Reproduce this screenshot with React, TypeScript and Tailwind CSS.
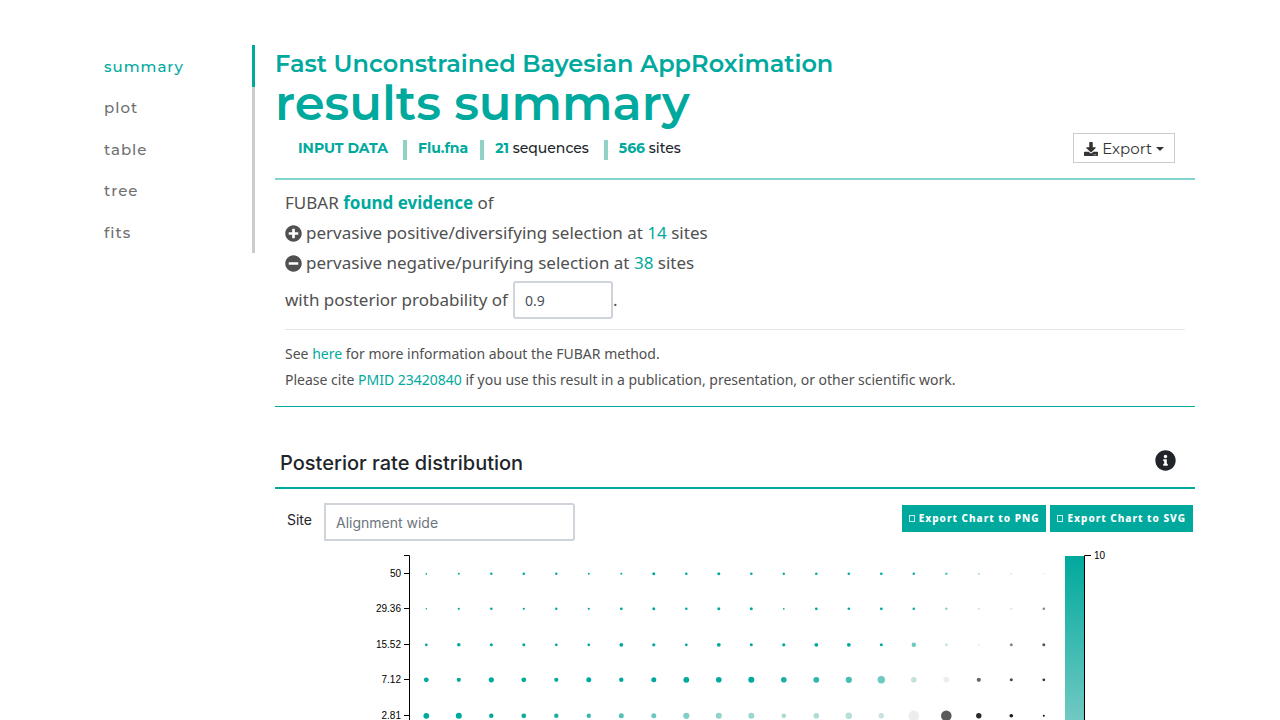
import { FaDownload, FaInfoCircle, FaMinusCircle, FaPlusCircle } from "react-icons/fa";

const sections = ["summary", "plot", "table", "tree", "fits"];

const T = "#00a99d";

type Dot = [radius: number, fill: string];

const rows: { label: string; y: number; dots: Dot[] }[] = [
  {
    label: "50",
    y: 29,
    dots: [
      [0.9, T], [1, T], [1.2, T], [1.3, T], [1.2, T], [1, T], [1, T], [1.5, T], [1.3, T], [1.5, T],
      [1.3, T], [1.2, T], [1.3, T], [1.3, T], [1.3, T], [1.3, "#12ab9f"], [1.3, "#5dc2b9"],
      [1.1, "#b5ddd8"], [0.9, "#dddddd"], [0.9, "#eeeeee"],
    ],
  },
  {
    label: "29.36",
    y: 64,
    dots: [
      [0.8, T], [1.1, T], [1.3, T], [1.1, T], [1.2, T], [1.1, T], [1.4, T], [1.5, T], [1.3, T], [1.5, T],
      [1.5, T], [0.9, T], [1.4, T], [1.3, T], [1.4, T], [1.4, "#21aea3"], [1.2, "#8accc5"],
      [1, "#cfe2df"], [1, "#dddddd"], [1.3, "#888888"],
    ],
  },
  {
    label: "15.52",
    y: 100,
    dots: [
      [1.4, T], [1.8, T], [1.5, T], [1.5, T], [1.4, T], [1.4, T], [1.9, T], [1.6, T], [1.4, T], [1.9, T],
      [1.5, T], [1.6, T], [1.9, T], [1.9, T], [1.5, T], [2.2, "#6cc7bf"], [1.5, "#c8e4e0"],
      [1.2, "#eeeeee"], [1.5, "#888888"], [1.5, "#555555"],
    ],
  },
  {
    label: "7.12",
    y: 135,
    dots: [
      [2.4, T], [2.1, T], [2.6, T], [2.4, T], [2.1, T], [2.5, T], [2.2, T], [2.5, T], [2.9, T], [2.8, T],
      [3, T], [2.8, "#1bafa4"], [2.9, "#30b5ab"], [3.1, "#49bdb4"], [3.7, "#6dc9c2"],
      [2.8, "#c2e1dd"], [3, "#eeeeee"], [2.1, "#686868"], [1.5, "#4a4a4a"], [1.4, "#333333"],
    ],
  },
  {
    label: "2.81",
    y: 171,
    dots: [
      [2.9, T], [3, T], [2.2, T], [2.4, "#0bab9f"], [2.2, "#18afa4"], [2.2, "#3ab7ad"],
      [2.5, "#55c0b8"], [2.5, "#6cc7bf"], [3.1, "#80cec6"], [3, "#91d2cb"], [3, "#9cd6cf"],
      [2.3, "#a8d9d3"], [2.8, "#b0dcd6"], [3.3, "#b8dfda"], [2.7, "#c6e3df"], [5.3, "#ededed"],
      [5.3, "#5a5a5a"], [2.7, "#2a2a2a"], [1.8, "#181818"], [1, "#111111"],
    ],
  },
];

function Chart() {
  return (
    <svg viewBox="0 0 920 175" className="block w-full" role="img" aria-label="Posterior rate distribution">
      <defs>
        <linearGradient id="scale" x1="0" y1="0" x2="0" y2="1">
          <stop offset="0" stopColor="#00a99d" />
          <stop offset="1" stopColor="#70c9c2" />
        </linearGradient>
      </defs>
      <path d="M129 10.5H134.5V175" fill="none" stroke="#000" />
      {rows.map((row) => (
        <g key={row.label}>
          <path d={`M129 ${row.y - 0.5}h5`} stroke="#000" />
          <text
            x="126"
            y={row.y + 3}
            textAnchor="end"
            className="font-['Liberation_Sans',sans-serif] text-[10px]"
          >
            {row.label}
          </text>
          {row.dots.map(([radius, fill], i) => (
            <circle key={i} cx={151.3 + i * 32.5} cy={row.y - 0.2} r={radius} fill={fill} />
          ))}
        </g>
      ))}
      <rect x="790" y="11" width="20" height="164" fill="url(#scale)" />
      <path d="M816 10.5H809.5V175" fill="none" stroke="#000" />
      <text x="819" y="14" className="font-['Liberation_Sans',sans-serif] text-[10px]">
        10
      </text>
    </svg>
  );
}

function Divider() {
  return <span aria-hidden="true" className="mt-[2px] h-5 w-1 bg-[#8fd1c5]" />;
}

function ChartButton({ children }: { children: string }) {
  return (
    <button
      type="button"
      className="flex h-[27px] items-center gap-1 bg-[#00a99d] px-[7px] font-['Noto_Sans',sans-serif] text-[10px] font-extrabold tracking-[1px] whitespace-nowrap text-white"
    >
      <span aria-hidden="true" className="h-[7px] w-[6px] border border-white/80" />
      {children}
    </button>
  );
}

export default function App() {
  return (
    <div className="flex min-h-screen bg-white pt-[45px] font-['Inter',sans-serif] text-[#212529]">
      <nav className="ml-20 grid h-[208px] w-[175px] shrink-0 grid-rows-5 font-['Montserrat','Inter',sans-serif] text-[15px] font-medium tracking-[1px]">
        {sections.map((name, i) => (
          <a
            key={name}
            href={`#${name}`}
            className={
              i === 0
                ? "flex items-center border-r-3 border-[#00a99d] px-6 pt-[2px] text-[#00a99d]"
                : "flex items-center border-r-3 border-[#cccccc] px-6 pt-[2px] text-[#707070]"
            }
          >
            {name}
          </a>
        ))}
      </nav>

      <main className="mr-[85px] ml-5 min-w-0 flex-1">
        <header
          id="summary"
          className="flex h-[135px] flex-col border-b-2 border-[#7fd4ce] font-['Montserrat','Inter',sans-serif]"
        >
          <h1 className="text-[#00a99d]">
            <span className="block pt-1 text-[24px] leading-[29px] font-semibold">
              Fast Unconstrained Bayesian AppRoximation
            </span>
            <span className="block text-[48px] leading-[50px] font-semibold">results summary</span>
          </h1>
          <div className="flex items-start justify-between pr-5 pl-[23px]">
            <div className="flex items-start gap-[11px] pt-[10px] text-[14px] leading-5 font-medium">
              <strong className="pr-1 font-bold text-[#00a99d]">INPUT DATA</strong>
              <Divider />
              <strong className="pr-px font-bold text-[#00a99d]">Flu.fna</strong>
              <Divider />
              <span className="pr-1">
                <strong className="font-bold text-[#00a99d]">21</strong> sequences
              </span>
              <Divider />
              <span>
                <strong className="font-bold text-[#00a99d]">566</strong> sites
              </span>
            </div>
            <button
              type="button"
              aria-haspopup="menu"
              className="mt-[5px] flex h-[30px] items-center gap-1 border border-[#cccccc] px-[10px] pt-[2px] text-[15px] text-[#333333]"
            >
              <FaDownload className="size-[14px]" />
              Export
              <span aria-hidden="true" className="border-x-4 border-t-4 border-x-transparent border-t-[#333333]" />
            </button>
          </div>
        </header>

        <section className="border-b border-[#00a99d] px-[10px] pt-2 pb-[13px] font-['Noto_Sans',sans-serif] text-[#505050]">
          <div className="text-[17px] leading-[30px]">
            <p>
              FUBAR <strong className="font-bold text-[#00a99d]">found evidence</strong> of
            </p>
            <p className="flex items-center gap-1">
              <FaPlusCircle />
              <span>
                pervasive positive/diversifying selection at <span className="text-[#00a99d]">14</span> sites
              </span>
            </p>
            <p className="flex items-center gap-1">
              <FaMinusCircle />
              <span>
                pervasive negative/purifying selection at <span className="text-[#00a99d]">38</span> sites
              </span>
            </p>
            <p className="mt-[3px] flex items-center">
              <label htmlFor="probability" className="pr-[5px]">
                with posterior probability of
              </label>
              <input
                id="probability"
                defaultValue="0.9"
                className="h-[38px] w-[100px] rounded-[3px] border-2 border-[#ced4da] px-[10px] text-[14px] text-[#495057]"
              />
              .
            </p>
          </div>
          <div className="mt-[10px] border-t border-[#e5e5e5] pt-[11px] text-[14px] leading-[26px]">
            <p>
              See{" "}
              <a href="#method" className="text-[#00a99d]">
                here
              </a>{" "}
              for more information about the FUBAR method.
            </p>
            <p>
              Please cite{" "}
              <a href="#citation" className="text-[#00a99d]">
                PMID 23420840
              </a>{" "}
              if you use this result in a publication, presentation, or other scientific work.
            </p>
          </div>
        </section>

        <section id="plot">
          <div className="mt-[37px] flex h-[45px] items-center justify-between border-b-2 border-[#00a99d] pr-[19px] pb-[6px] pl-[5px]">
            <h2 className="text-[20px] font-medium">Posterior rate distribution</h2>
            <button type="button" aria-label="About this plot" className="pb-[5px] text-[21px]">
              <FaInfoCircle />
            </button>
          </div>
          <div className="flex items-start justify-between pt-[14px] pr-[2px] pb-1 pl-3">
            <div className="flex items-start gap-3 text-[14px]">
              <label htmlFor="site" className="pt-[6px]">
                Site
              </label>
              <input
                id="site"
                placeholder="Alignment wide"
                className="h-[38px] w-[251px] rounded-r-[3px] border-2 border-[#ced4da] px-[10px] placeholder:text-[#6c757d]"
              />
            </div>
            <div className="flex gap-1 pt-[2px]">
              <ChartButton>Export Chart to PNG</ChartButton>
              <ChartButton>Export Chart to SVG</ChartButton>
            </div>
          </div>
          <Chart />
        </section>
      </main>
    </div>
  );
}
